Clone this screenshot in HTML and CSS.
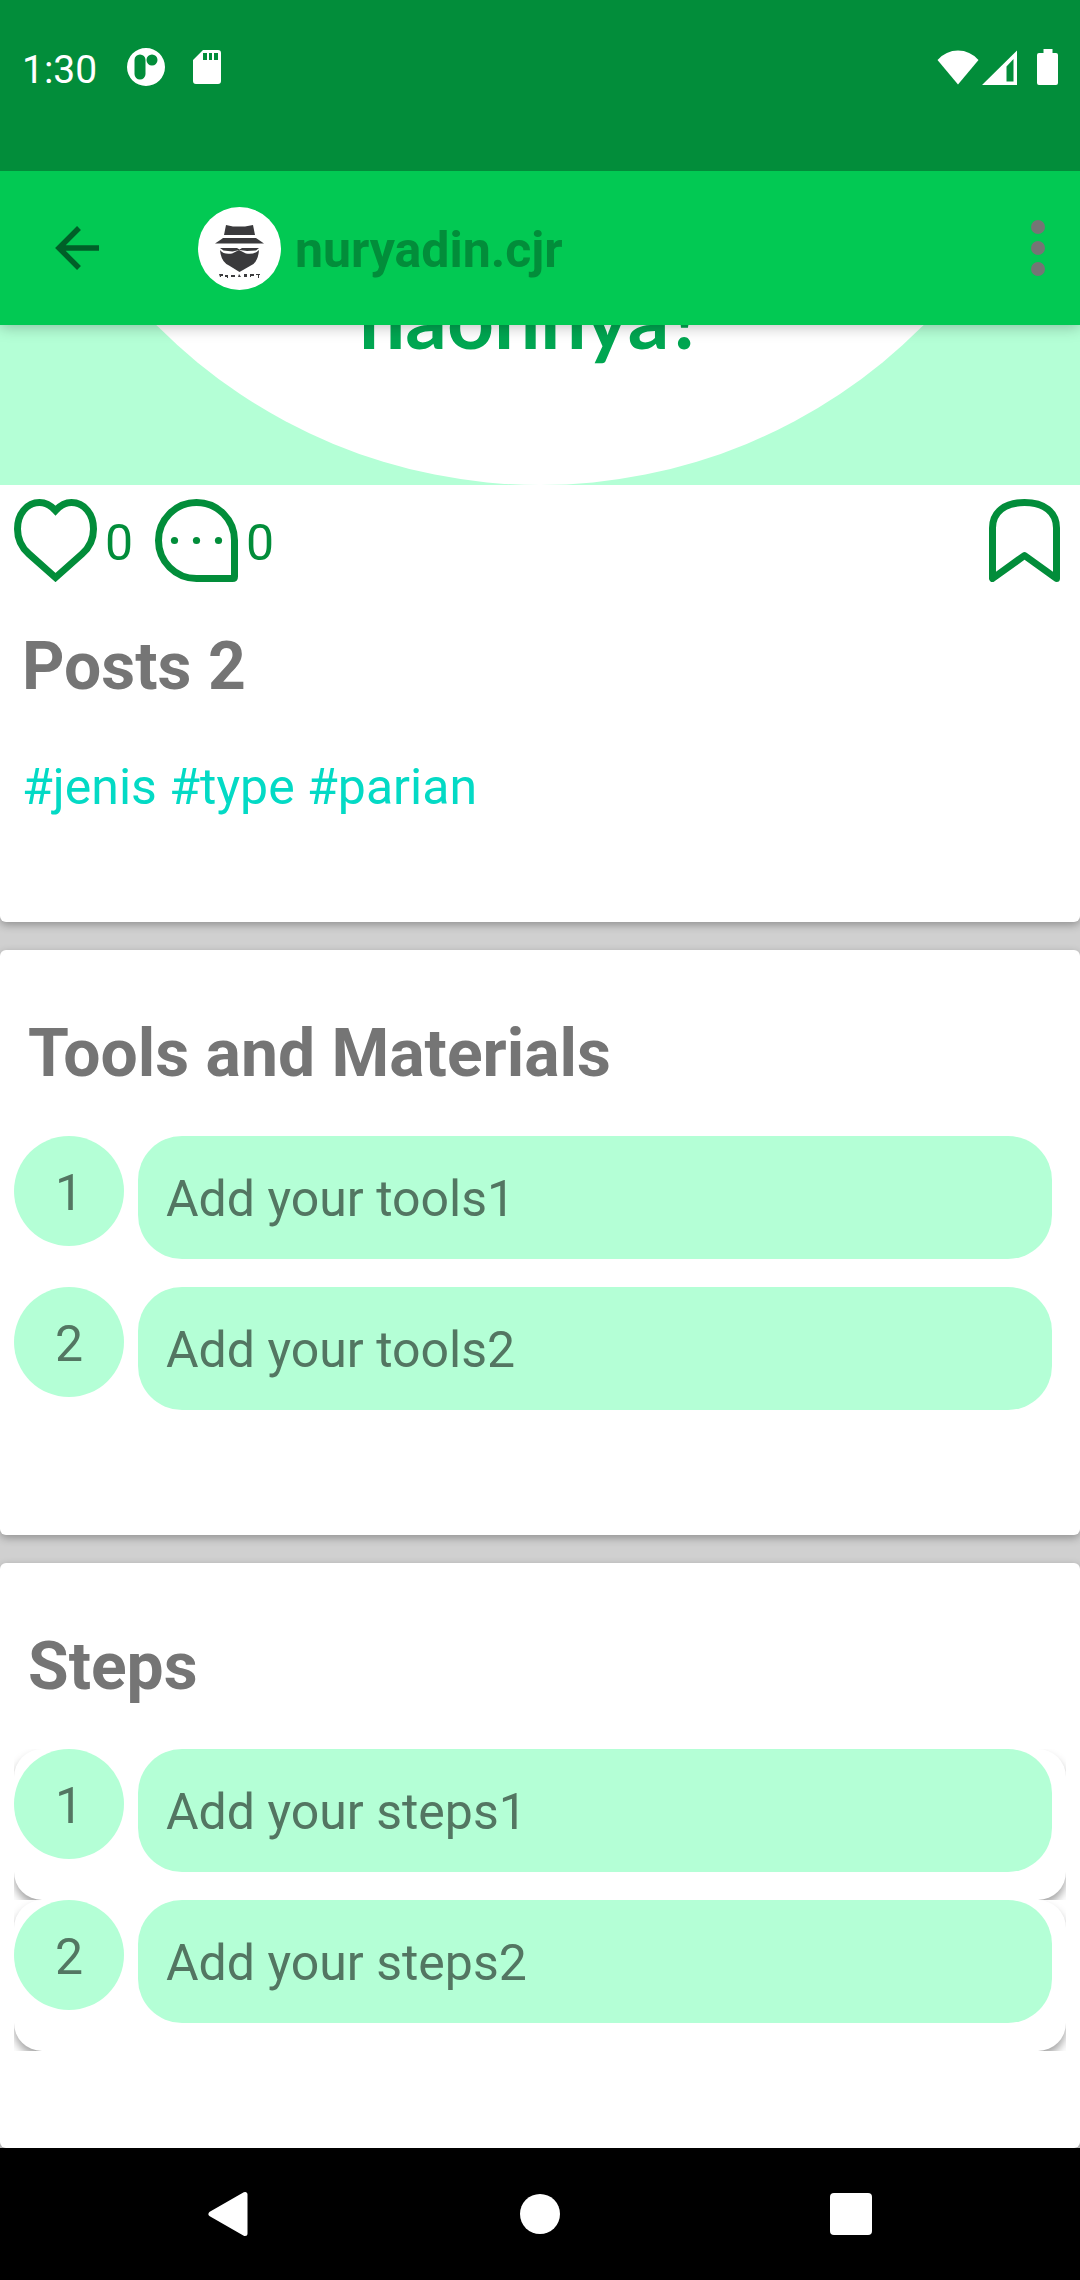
FILE: index.html
```html
<!DOCTYPE html>
<html lang="en">
<head>
<meta charset="utf-8">
<meta name="viewport" content="width=device-width, initial-scale=1">
<title>Posts 2</title>
<link rel="stylesheet" href="styles.css">
</head>
<body>
<div class="status-bar">
  <div class="status-group status-left">
    <span class="clock">1:30</span>
    <svg class="status-app" width="38" height="38" viewBox="0 0 38 38" aria-hidden="true"><path fill="#fff" fill-rule="evenodd" d="M19 0a19 19 0 1 0 0 38a19 19 0 1 0 0-38zM13 6.500a5.500 5.500 0 0 1 5.500 5.500v14a5.500 5.500 0 0 1-11 0v-14a5.500 5.500 0 0 1 5.500-5.500zM25 6.500a5.500 5.500 0 1 1 0 11a5.500 5.500 0 1 1 0-11z"/></svg>
    <svg width="28" height="36" viewBox="0 0 28 36" aria-hidden="true"><path fill="#fff" fill-rule="evenodd" d="M10 1h15a3 3 0 0 1 3 3v28a3 3 0 0 1-3 3H3a3 3 0 0 1-3-3V11zM10 4v7h4V4zM16 4v7h3V4zM21 4v7h4V4z"/></svg>
  </div>
  <div class="status-group status-right">
    <svg width="42" height="36" viewBox="0 0 42 36" aria-hidden="true"><path fill="#fff" d="M21 35.500L0.500 11Q9 1.500 21 1.500T41.500 11z"/></svg>
    <svg width="36" height="36" viewBox="0 0 36 36" aria-hidden="true"><path fill="#fff" fill-rule="evenodd" d="M0 36L35 1.500V36zM24.500 17.500V32.500H31.500V10z"/></svg>
    <svg class="battery" width="21" height="36" viewBox="0 0 21 36" aria-hidden="true"><path fill="#fff" d="M6.500 0h9v4H19a2 2 0 0 1 2 2v28a2 2 0 0 1-2 2H2a2 2 0 0 1-2-2V6a2 2 0 0 1 2-2h4.500z"/></svg>
  </div>
</div>

<header class="toolbar">
  <button class="icon-button back" type="button" aria-label="Back">
    <svg width="44" height="44" viewBox="0 0 44 44"><path d="M44 22H4M24 2L4 22L24 42" fill="none" stroke="#005f28" stroke-width="5.500"/></svg>
  </button>
  <svg class="avatar" width="83" height="83" viewBox="0 0 83 83" role="img" aria-label="Profile picture">
    <circle cx="41.500" cy="41.500" r="41.500" fill="#fff"/>
    <g fill="#3a3a3c">
      <path d="M28 18l7 1.500h12l8-1.500l2 10H26z"/>
      <path d="M25 31h33l8 5.500H17l6-4z"/>
      <path d="M22 41h17l2.500 1.500L44 41h17l-3 2.500l-9 .500l-7.500-1l-7 1.500l-9-1z"/>
      <path d="M22 43q4 5 12 3.500l7-3.500l7 3.500q8 1.500 13-3.500q-1 13-9 16l-10.500 6l-10.500-6.500Q23 55 22 43z"/>
      <path d="M21 67h4v2h-2v1h-1zM27 68h3v3h-1v-1h-2zM33 68h4v2h-4zM41 67l2 3h-3zM46 67h3v3h-3zM52 67h4v2h-3v1h-1zM58 67h4v1h-1v3h-1v-3h-2z"/>
    </g>
  </svg>
  <h1 class="author">nuryadin.cjr</h1>
  <button class="icon-button more" type="button" aria-label="More options">
    <svg width="14" height="56" viewBox="0 0 14 56" fill="#757575"><circle cx="7" cy="7" r="7"/><circle cx="7" cy="28" r="7"/><circle cx="7" cy="49" r="7"/></svg>
  </button>
</header>

<main class="feed">
  <article class="card post">
    <div class="cover">
      <div class="cover-disc"></div>
      <p class="cover-text">naonnya?</p>
    </div>
    <div class="actions">
      <button class="action" type="button" aria-label="Like">
        <svg width="83" height="83" viewBox="0 0 83 83"><path d="M41.500 11.500C35 4.500 30 3.500 25.500 3.500C13 3.500 3.500 15 3.500 30C3.500 41 8 49 15 55L41.500 78.500L68 55C75 49 79.500 41 79.500 30C79.500 15 70 3.500 57.500 3.500C53 3.500 48 4.500 41.500 11.500z" fill="none" stroke="#028d3a" stroke-width="7"/></svg>
        <span>0</span>
      </button>
      <button class="action" type="button" aria-label="Comment">
        <svg width="83" height="83" viewBox="0 0 83 83"><path d="M41.500 3.500A38 38 0 0 1 79.500 41.500V77.500Q79.500 79.500 77.500 79.500H41.500A38 38 0 0 1 41.500 3.500z" fill="none" stroke="#028d3a" stroke-width="7"/><g fill="#028d3a"><circle cx="19.500" cy="41.500" r="3.600"/><circle cx="41.500" cy="41.500" r="3.600"/><circle cx="63.500" cy="41.500" r="3.600"/></g></svg>
        <span>0</span>
      </button>
      <button class="action bookmark" type="button" aria-label="Save">
        <svg width="71" height="83" viewBox="0 0 71 83"><path d="M3.500 79.500V29C3.500 13 16 3.500 35.500 3.500S67.500 13 67.500 29V79.500L35.500 56.500z" fill="none" stroke="#028d3a" stroke-width="7" stroke-linejoin="round"/></svg>
      </button>
    </div>
    <h2 class="post-title">Posts 2</h2>
    <p class="tags"><a href="#jenis">#jenis</a> <a href="#type">#type</a> <a href="#parian">#parian</a></p>
  </article>

  <section class="card">
    <h2 class="card-title">Tools and Materials</h2>
    <ol class="items">
      <li class="item"><div class="item-row"><span class="number">1</span><span class="pill">Add your tools1</span></div></li>
      <li class="item"><div class="item-row"><span class="number">2</span><span class="pill">Add your tools2</span></div></li>
    </ol>
  </section>

  <section class="card">
    <h2 class="card-title">Steps</h2>
    <ol class="items steps">
      <li class="item"><div class="item-row"><span class="number">1</span><span class="pill">Add your steps1</span></div></li>
      <li class="item"><div class="item-row"><span class="number">2</span><span class="pill">Add your steps2</span></div></li>
    </ol>
  </section>
</main>

<nav class="system-nav" aria-label="System">
  <button class="icon-button" type="button" aria-label="Back"><svg width="44" height="46" viewBox="0 0 44 46"><path d="M4 23L38 3.500V42.500z" fill="#fff" stroke="#fff" stroke-width="5" stroke-linejoin="round"/></svg></button>
  <button class="icon-button" type="button" aria-label="Home"><svg width="42" height="42" viewBox="0 0 42 42"><circle cx="21" cy="21" r="20" fill="#fff"/></svg></button>
  <button class="icon-button" type="button" aria-label="Recents"><svg width="42" height="42" viewBox="0 0 42 42"><rect width="42" height="42" rx="4" fill="#fff"/></svg></button>
</nav>
</body>
</html>
```
FILE: styles.css
```css
* {
  box-sizing: border-box;
}

body {
  display: flex;
  flex-direction: column;
  min-height: 100vh;
  margin: 0;
  background: #d0d0d0;
  color: #757575;
  font-family: Roboto, "Liberation Sans", sans-serif;
  font-size: 50px;
  line-height: 67px;
}

h1, h2, p, ol {
  margin: 0;
  padding: 0;
}

svg {
  display: block;
  flex: none;
}

button {
  padding: 0;
  border: 0;
  background: none;
  color: inherit;
  font: inherit;
}

.icon-button {
  display: flex;
  align-items: center;
  justify-content: center;
}

/* Status bar */
.status-bar {
  position: relative;
  z-index: 2;
  display: flex;
  justify-content: space-between;
  padding: 45px 22px 82px;
  background: #028d3a;
  color: #fff;
}

.status-group {
  display: flex;
  align-items: center;
  height: 44px;
}

.status-left {
  gap: 28px;
}

.status-right {
  gap: 3px;
}

.status-app {
  margin-left: 2px;
}

.battery {
  margin-left: 16px;
}

.clock {
  padding-top: 6px;
  font-size: 39px;
  line-height: 44px;
}

/* Toolbar */
.toolbar {
  position: relative;
  z-index: 1;
  display: flex;
  align-items: center;
  height: 154px;
  background: #02c953;
  box-shadow: 0 2px 14px rgba(0, 0, 0, 0.25);
}

.back {
  width: 154px;
  height: 154px;
}

.avatar {
  margin-left: 44px;
}

.author {
  flex: 1;
  padding: 4px 0 0 14px;
  color: #028d3a;
  font-size: 50px;
  font-weight: 700;
}

.more {
  width: 84px;
  height: 154px;
}

/* Feed */
.feed {
  display: flex;
  flex: 1;
  flex-direction: column;
  gap: 28px;
}

.card {
  padding: 60px 14px 97px;
  border-radius: 6px;
  background: #fff;
  box-shadow: 0 3px 8px rgba(0, 0, 0, 0.3);
}

.post {
  padding: 0 0 101px;
}

.cover {
  position: relative;
  height: 160px;
  overflow: hidden;
  background: #b4ffd6;
}

.cover-disc {
  position: absolute;
  bottom: 0;
  left: 0;
  width: 100%;
  aspect-ratio: 1;
  border-radius: 50%;
  background: #fff;
}

.cover-text {
  position: absolute;
  bottom: 118px;
  left: 0;
  width: 100%;
  padding-right: 16px;
  color: #00a651;
  font-family: Lato, sans-serif;
  font-size: 82px;
  font-weight: 700;
  line-height: 100px;
  text-align: center;
}

.actions {
  display: flex;
  gap: 22px;
  padding: 14px 20px 0 14px;
  color: #028d3a;
}

.action {
  display: flex;
  align-items: center;
  gap: 8px;
}

.action span {
  padding-top: 6px;
}

.bookmark {
  margin-left: auto;
}

.post-title,
.card-title {
  font-size: 66px;
  font-weight: 700;
  line-height: 88px;
}

.post-title {
  padding: 41px 22px 0;
}

.tags {
  padding: 43px 22px 0;
}

.tags a {
  color: #03dac5;
  text-decoration: none;
}

.card-title {
  padding: 0 14px 38px;
}

/* Numbered rows */
.items {
  list-style: none;
}

.item {
  overflow: hidden;
}

.item-row {
  display: flex;
  align-items: flex-start;
  gap: 14px;
  padding: 0 14px 28px 0;
  border-radius: 28px;
  background: #fff;
}

.steps .item-row {
  box-shadow: 0 6px 9px rgba(0, 0, 0, 0.35);
}

.number {
  flex: none;
  width: 110px;
  height: 110px;
  padding-top: 2px;
  border-radius: 50%;
  background: #b4ffd6;
  color: #537662;
  line-height: 110px;
  text-align: center;
}

.pill {
  flex: 1;
  padding: 30px 28px 26px;
  border-radius: 44px;
  background: #b4ffd6;
  color: #537662;
}

/* System navigation */
.system-nav {
  position: relative;
  z-index: 1;
  display: flex;
  justify-content: center;
  height: 132px;
  background: #000;
}

.system-nav .icon-button {
  flex: 0 1 311px;
}
```
